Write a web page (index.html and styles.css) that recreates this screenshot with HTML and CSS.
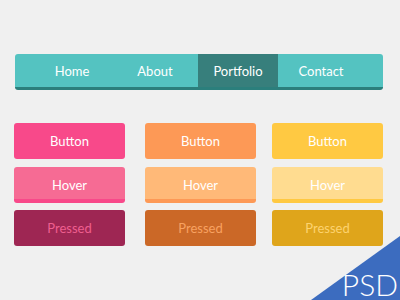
FILE: index.html
```html
<!DOCTYPE html>
<html>
<head>
<meta charset="utf-8">
<link rel="stylesheet" href="styles.css">
</head>
<body>
<div class="page">
  <nav class="nav">
    <a class="nav-item">Home</a>
    <a class="nav-item">About</a>
    <a class="nav-item active">Portfolio</a>
    <a class="nav-item">Contact</a>
  </nav>
  <div class="buttons">
    <div class="btn pink">Button</div>
    <div class="btn orange">Button</div>
    <div class="btn yellow">Button</div>
    <div class="btn pink hover">Hover</div>
    <div class="btn orange hover">Hover</div>
    <div class="btn yellow hover">Hover</div>
    <div class="btn pink pressed">Pressed</div>
    <div class="btn orange pressed">Pressed</div>
    <div class="btn yellow pressed">Pressed</div>
  </div>
  <div class="psd"><span class="psd-label">PSD</span></div>
</div>
</body>
</html>
```
FILE: styles.css
```css
html, body {
  margin: 0;
  padding: 0;
}
body {
  background: #f0f0f0;
  font-family: Lato, "Open Sans", sans-serif;
  width: 400px;
  height: 300px;
  overflow: hidden;
}
.page {
  position: relative;
  width: 400px;
  height: 300px;
  padding-top: 54px;
  box-sizing: border-box;
}
.nav {
  margin-left: 15px;
  width: 351px;
  height: 33px;
  background: #54c3c1;
  border-bottom: 3px solid #2b7f7c;
  border-radius: 3px;
  display: flex;
  gap: 3px;
  padding-left: 17px;
}
.nav-item {
  width: 80px;
  display: flex;
  align-items: center;
  justify-content: center;
  color: #ffffff;
  font-size: 13px;
}
.nav-item.active {
  background: #377f7c;
}
.buttons {
  margin-top: 33px;
  margin-left: 14px;
  display: grid;
  grid-template-columns: 131px 127px 111px;
  row-gap: 7.5px;
}
.btn {
  width: 111px;
  height: 36px;
  border-radius: 3px;
  display: flex;
  align-items: center;
  justify-content: center;
  color: #ffffff;
  font-size: 13px;
  box-sizing: border-box;
}
.btn.hover {
  border-bottom: 4px solid;
  padding-top: 4px;
}
.pink { background: #f8498a; }
.orange { background: #fd9956; }
.yellow { background: #ffc942; }
.pink.hover { background: #f66b94; border-color: #f8498a; }
.orange.hover { background: #ffb978; border-color: #fd9956; }
.yellow.hover { background: #ffdc90; border-color: #ffc942; }
.pink.pressed { background: #9e2653; color: #ef5f8f; }
.orange.pressed { background: #cb6827; color: #f8a261; }
.yellow.pressed { background: #dfa51b; color: #fdd36f; }
.psd {
  position: absolute;
  right: 0;
  bottom: 0;
  width: 89px;
  height: 64px;
}
.psd::before {
  content: "";
  position: absolute;
  inset: 0;
  background: #3c6cbf;
  clip-path: polygon(100% 0, 100% 100%, 0 100%);
}
.psd-label {
  position: absolute;
  right: 2px;
  bottom: 1px;
  color: #ffffff;
  font-size: 30px;
  font-weight: 300;
  line-height: 30px;
}
```
